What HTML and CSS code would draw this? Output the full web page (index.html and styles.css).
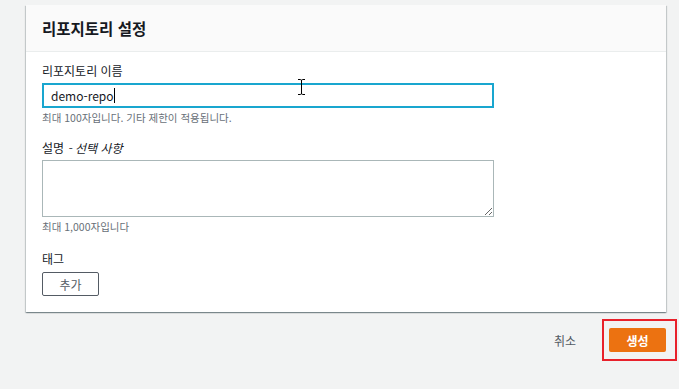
FILE: index.html
```html
<!DOCTYPE html>
<html lang="ko">
  <head>
    <meta charset="UTF-8" />
    <meta name="viewport" content="width=device-width, initial-scale=1.0" />
    <title>리포지토리 생성</title>
    <link rel="stylesheet" href="styles.css">
  </head>
  <body>
    <div class="page">
      <!-- Settings card -->
      <div class="card">
        <div class="card-header">
          <h2>리포지토리 설정</h2>
        </div>
        <div class="card-body">
          <div class="field field-name">
            <label>리포지토리 이름</label>
            <div class="text-input focused">
              <span>demo-repo</span><span class="caret"></span>
            </div>
            <svg class="ibeam" width="9" height="16" viewBox="0 0 9 16">
              <path d="M1 0.5h2.5M5.5 0.5h2.5M3.5 0.5q1 0 1 1.5v12q0 1.5 -1 1.5M5.5 0.5q-1 0 -1 1.5v12q0 1.5 1 1.5M1 15.5h2.5M5.5 15.5h2.5" stroke="#000" stroke-width="1" fill="none" />
            </svg>
            <div class="hint">최대 100자입니다. 기타 제한이 적용됩니다.</div>
          </div>

          <div class="field field-desc">
            <label>설명 <i>- 선택 사항</i></label>
            <textarea class="text-area"></textarea>
            <div class="hint">최대 1,000자입니다</div>
          </div>

          <div class="field">
            <label>태그</label>
            <button class="btn-normal">추가</button>
          </div>
        </div>
      </div>

      <!-- Form actions -->
      <div class="actions">
        <button class="btn-link">취소</button>
        <span class="highlight">
          <button class="btn-primary">생성</button>
        </span>
      </div>
    </div>
  </body>
</html>
```

FILE: styles.css
```css
* {
  box-sizing: border-box;
}
body {
  margin: 0;
  background-color: #f2f3f3;
  font-family: "Noto Sans CJK KR", "Noto Sans", sans-serif;
  color: #16191f;
}
.page {
  padding: 5px 0 0 26px;
}
.card {
  background-color: #ffffff;
  margin-right: 13px;
  box-shadow: 0 1px 1px 0 rgba(0, 28, 36, 0.3),
    1px 1px 1px 0 rgba(0, 28, 36, 0.15), -1px 1px 1px 0 rgba(0, 28, 36, 0.15);
}
.card-header {
  background-color: #fafafa;
  border-bottom: 1px solid #eaeded;
  height: 47px;
  padding: 0 16px;
  display: flex;
  align-items: center;
}
.card-header h2 {
  margin: 0;
  font-size: 15.5px;
  font-weight: 700;
  line-height: 20px;
}
.card-body {
  padding: 11px 16px 16px;
}
.field {
  position: relative;
}
.field-name {
  margin-bottom: 15px;
}
.field-desc {
  margin-bottom: 17px;
}
label {
  display: block;
  font-size: 12px;
  line-height: 16px;
  margin-bottom: 4px;
}
label i {
  font-style: italic;
}
.text-input {
  width: 452px;
  height: 25px;
  border: 2px solid #19a6cf;
  padding: 0 7px;
  display: flex;
  align-items: center;
  font-size: 12px;
}
.caret {
  width: 1px;
  height: 15px;
  background-color: #000;
}
.ibeam {
  position: absolute;
  left: 255px;
  top: 16px;
}
.text-area {
  display: block;
  width: 452px;
  height: 57px;
  border: 1px solid #aab7b8;
  border-radius: 0;
  margin: 0;
  padding: 4px 8px;
  font-family: inherit;
}
.hint {
  font-size: 10.5px;
  line-height: 14px;
  color: #687078;
  margin-top: 3px;
}
.btn-normal {
  display: block;
  width: 57px;
  height: 24px;
  background-color: #ffffff;
  border: 1px solid #545b64;
  border-radius: 2px;
  color: #545b64;
  font-family: inherit;
  font-size: 12px;
  margin-top: 5px;
  cursor: pointer;
}
.actions {
  display: flex;
  justify-content: flex-end;
  align-items: center;
  gap: 26px;
  padding-right: 2px;
  margin-top: 7px;
}
.btn-link {
  background: none;
  border: none;
  padding: 0;
  color: #545b64;
  font-family: inherit;
  font-size: 12px;
  cursor: pointer;
}
.highlight {
  display: block;
  border: 2px solid #e8212b;
  padding: 7px 9px 7px 5px;
}
.btn-primary {
  display: block;
  width: 57px;
  height: 24px;
  background-color: #ec7211;
  border: none;
  border-radius: 2px;
  color: #ffffff;
  font-family: inherit;
  font-size: 12px;
  font-weight: 700;
  cursor: pointer;
}
```
